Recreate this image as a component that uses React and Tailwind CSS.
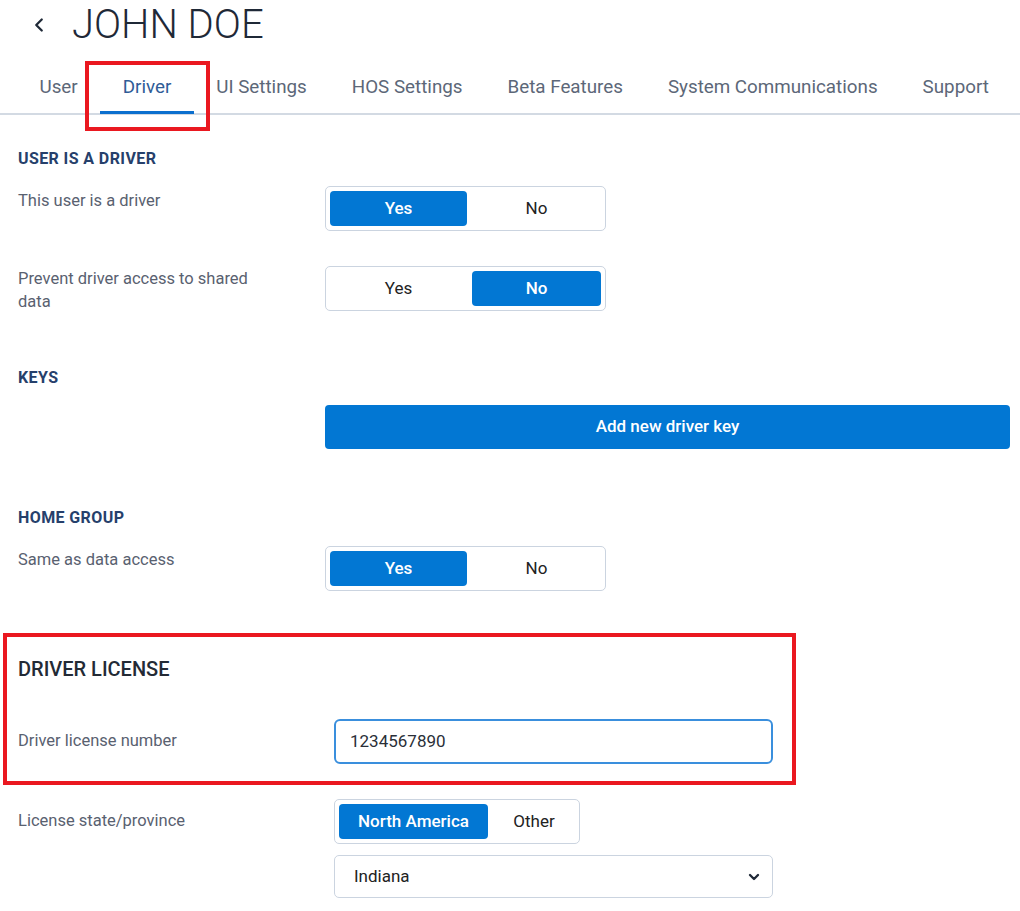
import { ChevronLeft, ChevronDown } from 'lucide-react'

const tabs = ['User', 'Driver', 'UI Settings', 'HOS Settings', 'Beta Features', 'System Communications', 'Support']

function Toggle({ value, left = 'Yes', right = 'No', widths = ['w-[137px]', 'w-[129px]'] }) {
  return (
    <div className="flex gap-[5px] rounded-[5px] border-[1.5px] border-[#cbd4e0] bg-white p-[4px]">
      {[left, right].map((label, i) => {
        const active = value === label
        return (
          <div
            key={label}
            className={`${widths[i]} flex h-[35px] items-center justify-center rounded-[4px] text-[17px] ${
              active ? 'bg-[#0277d3] font-medium text-white' : 'text-[#222]'
            }`}
          >
            {label}
          </div>
        )
      })}
    </div>
  )
}

function SectionTitle({ children }) {
  return <h2 className="text-[16px] font-bold leading-none tracking-[0.4px] text-[#26406b]">{children}</h2>
}

function Label({ children }) {
  return <div className="w-[307px] pr-[50px] text-[16.5px] leading-[23px] text-[#596170]">{children}</div>
}

export default function App() {
  return (
    <div className="relative min-h-screen bg-white font-['Roboto',sans-serif]">
      {/* header */}
      <div className="flex items-center pt-[5px]">
        <ChevronLeft className="ml-[28px] h-[22px] w-[22px] text-[#1f2937]" strokeWidth={2.5} />
        <h1 className="ml-[22px] text-[40px] font-light leading-[40px] text-[#1f2937]">JOHN DOE</h1>
      </div>

      {/* tabs */}
      <div className="mt-[26px] flex border-b-2 border-[#d3dae3] pl-[17px]">
        {tabs.map((tab) => (
          <div
            key={tab}
            className={`px-[22.5px] pb-[12px] pt-[4px] text-[18.8px] leading-[24px] border-b-[3px] -mb-[1px] ${
              tab === 'Driver' ? 'border-[#0b6fce] text-[#2f5c97]' : 'border-transparent text-[#5c6778]'
            }`}
          >
            {tab}
          </div>
        ))}
      </div>

      {/* highlight box around Driver tab */}
      <div className="absolute left-[85px] top-[61px] h-[70px] w-[125px] border-[4px] border-[#ea1820]" />

      <div className="pl-[18px]">
        {/* user is a driver */}
        <div className="mt-[36px]">
          <SectionTitle>USER IS A DRIVER</SectionTitle>
        </div>
        <div className="mt-[19px] flex items-start">
          <div className="pt-[3px]">
            <Label>This user is a driver</Label>
          </div>
          <Toggle value="Yes" />
        </div>
        <div className="mt-[35px] flex items-start">
          <div className="pt-[1px]">
            <Label>Prevent driver access to shared data</Label>
          </div>
          <Toggle value="No" />
        </div>

        {/* keys */}
        <div className="mt-[57px]">
          <SectionTitle>KEYS</SectionTitle>
        </div>
        <div className="mt-[19px] pl-[307px] pr-[10px]">
          <button className="flex h-[44px] w-full items-center justify-center rounded-[4px] bg-[#0277d3] text-[17px] font-medium text-white">
            Add new driver key
          </button>
        </div>

        {/* home group */}
        <div className="mt-[61px]">
          <SectionTitle>HOME GROUP</SectionTitle>
        </div>
        <div className="mt-[20px] flex items-start">
          <div className="pt-[2px]">
            <Label>Same as data access</Label>
          </div>
          <Toggle value="Yes" />
        </div>
      </div>

      {/* driver license */}
      <div className="relative mt-[42px] ml-[3px] mr-[224px] h-[152px] border-[4px] border-[#ea1820] pl-[11px]">
        <h2 className="mt-[22px] text-[20px] font-medium leading-none text-[#232a35]">DRIVER LICENSE</h2>
        <div className="mt-[40px] flex items-center">
          <div className="w-[316px] text-[16.5px] text-[#596170]">Driver license number</div>
          <div className="flex h-[45px] w-[439px] shrink-0 items-center rounded-[6px] border-2 border-[#3a8fdd] px-[14px] text-[17px] text-[#2a2f38]">
            1234567890
          </div>
        </div>
      </div>

      <div className="mt-[14px] flex items-start pl-[18px]">
        <div className="w-[316px] pt-[10px] text-[16.5px] text-[#596170]">License state/province</div>
        <div className="flex flex-col items-start gap-[11px]">
          <Toggle value="North America" left="North America" right="Other" widths={['w-[149px]', 'w-[82px]']} />
          <div className="flex h-[43px] w-[439px] items-center justify-between rounded-[5px] border-[1.5px] border-[#cbd4e0] pl-[19px] pr-[10px] text-[17px] text-[#222]">
            Indiana
            <ChevronDown className="h-[16px] w-[16px] text-[#1f2937]" strokeWidth={3.5} />
          </div>
        </div>
      </div>
    </div>
  )
}
